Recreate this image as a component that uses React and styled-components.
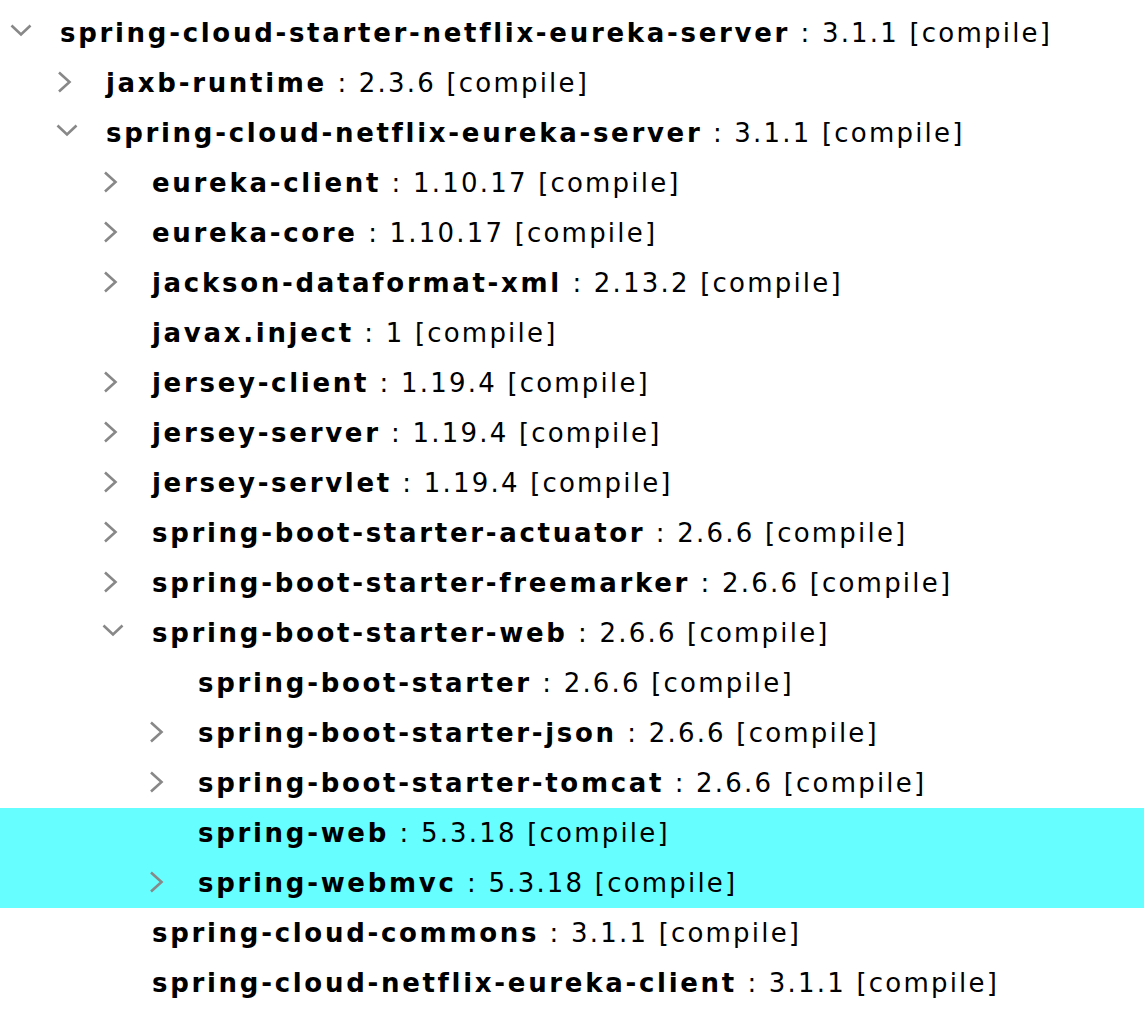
import React, { useState } from 'react';
import styled, { createGlobalStyle } from 'styled-components';

const GlobalStyle = createGlobalStyle`
  html, body {
    margin: 0;
    padding: 0;
    background: #fff;
  }
  body {
    font-family: 'DejaVu Sans', 'Liberation Sans', sans-serif;
    overflow: hidden;
  }
`;

// dependency tree (only what the view shows)
const dependencies = [
  {
    name: 'spring-cloud-starter-netflix-eureka-server',
    version: '3.1.1',
    open: true,
    children: [
      { name: 'jaxb-runtime', version: '2.3.6', children: [] },
      {
        name: 'spring-cloud-netflix-eureka-server',
        version: '3.1.1',
        open: true,
        children: [
          { name: 'eureka-client', version: '1.10.17', children: [] },
          { name: 'eureka-core', version: '1.10.17', children: [] },
          { name: 'jackson-dataformat-xml', version: '2.13.2', children: [] },
          { name: 'javax.inject', version: '1' },
          { name: 'jersey-client', version: '1.19.4', children: [] },
          { name: 'jersey-server', version: '1.19.4', children: [] },
          { name: 'jersey-servlet', version: '1.19.4', children: [] },
          { name: 'spring-boot-starter-actuator', version: '2.6.6', children: [] },
          { name: 'spring-boot-starter-freemarker', version: '2.6.6', children: [] },
          {
            name: 'spring-boot-starter-web',
            version: '2.6.6',
            open: true,
            children: [
              { name: 'spring-boot-starter', version: '2.6.6' },
              { name: 'spring-boot-starter-json', version: '2.6.6', children: [] },
              { name: 'spring-boot-starter-tomcat', version: '2.6.6', children: [] },
              { name: 'spring-web', version: '5.3.18', selected: true },
              { name: 'spring-webmvc', version: '5.3.18', selected: true, children: [] },
            ],
          },
          { name: 'spring-cloud-commons', version: '3.1.1' },
          { name: 'spring-cloud-netflix-eureka-client', version: '3.1.1' },
        ],
      },
    ],
  },
];

const flatten = (nodes, level = 0, out = []) => {
  nodes.forEach(node => {
    out.push({ ...node, level });
    if (node.open && node.children) flatten(node.children, level + 1, out);
  });
  return out;
};

const Chevron = ({ open }) => (
  <svg width="24" height="24" viewBox="0 0 24 24" fill="none">
    {open ? (
      <polyline points="1.5,4.5 11,13.5 20.5,4.5" stroke="#888" strokeWidth="2.6" />
    ) : (
      <polyline points="3,1.5 13.5,11 3,20.5" stroke="#888" strokeWidth="2.6" />
    )}
  </svg>
);

const App = () => {
  const [selected] = useState('spring-web');
  const rows = flatten(dependencies);

  return (
    <>
      <GlobalStyle />
      <Tree>
        {/* previous row, mostly scrolled out of view */}
        <Row $level={0}>
          <Toggle />
          <Name $color="#4fb848">spring-boot-starter-test</Name>
        </Row>
        {rows.map(row => (
          <Row key={row.name} $level={row.level} $selected={row.selected || row.name === selected}>
            <Toggle>{row.children && <Chevron open={row.open} />}</Toggle>
            <Name>{row.name}</Name>
            <Info>&nbsp;: {row.version} [compile]</Info>
          </Row>
        ))}
      </Tree>
    </>
  );
};

export default App;

const Tree = styled.div`
  display: flex;
  flex-direction: column;
  margin-top: -42px;
`;

const Row = styled.div`
  display: flex;
  align-items: center;
  height: 50px;
  padding-left: ${p => 10 + p.$level * 46}px;
  background: ${p => (p.$selected ? '#66feff' : 'transparent')};
  white-space: nowrap;
`;

const Toggle = styled.span`
  display: flex;
  align-items: center;
  justify-content: center;
  width: 24px;
  height: 24px;
  margin-right: 26px;
  flex-shrink: 0;
`;

const Name = styled.span`
  font-size: 26px;
  font-weight: bold;
  letter-spacing: 2.7px;
  color: ${p => p.$color || '#000'};
`;

const Info = styled.span`
  font-size: 26px;
  letter-spacing: 2.2px;
  color: #000;
`;
